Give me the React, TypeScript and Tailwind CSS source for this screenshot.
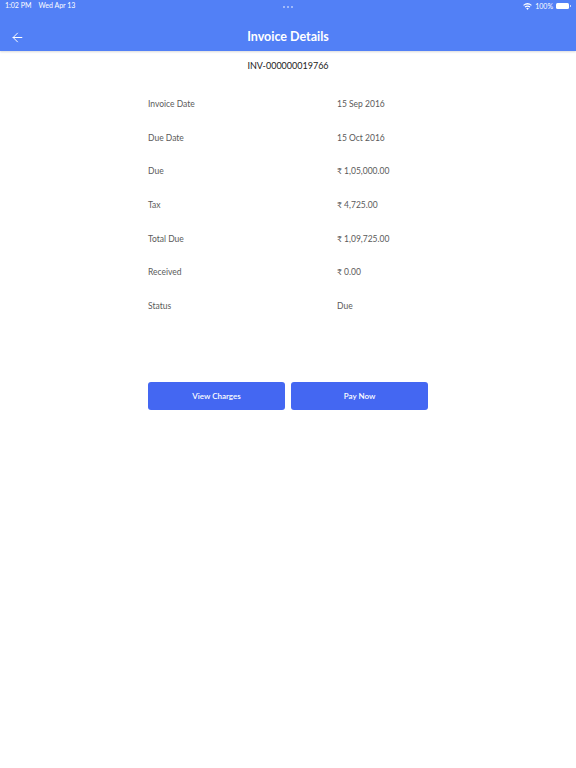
import { ArrowLeft } from "lucide-react";

const rows = [
  ["Invoice Date", "15 Sep 2016"],
  ["Due Date", "15 Oct 2016"],
  ["Due", "₹ 1,05,000.00"],
  ["Tax", "₹ 4,725.00"],
  ["Total Due", "₹ 1,09,725.00"],
  ["Received", "₹ 0.00"],
  ["Status", "Due"],
];

const App = () => {
  return (
    <div className="min-h-[768px] bg-white font-['Lato','Open_Sans',sans-serif]">
      <div className="bg-[#5280f6] shadow-[0_1px_2px_rgba(0,0,0,0.15)]">
        <div className="flex h-[24px] items-start justify-between px-[5px] pt-[0px] text-[7px] text-white">
          <div className="flex w-[100px] gap-[7px]">
            <span>1:02 PM</span>
            <span>Wed Apr 13</span>
          </div>
          <div className="flex gap-[2px] pt-[6px]">
            <span className="h-[2px] w-[2px] rounded-full bg-white/60" />
            <span className="h-[2px] w-[2px] rounded-full bg-white/60" />
            <span className="h-[2px] w-[2px] rounded-full bg-white/60" />
          </div>
          <div className="flex w-[100px] items-center justify-end gap-[3px] pt-[1px]">
            <svg width="9" height="7" viewBox="0 0 24 18" fill="white">
              <path d="M12 18l3.5-4.2a5.5 5.5 0 00-7 0z" />
              <path d="M12 9.5a9 9 0 015.8 2.1l1.9-2.3a12 12 0 00-15.4 0l1.9 2.3A9 9 0 0112 9.5z" />
              <path d="M12 3.5a15 15 0 019.6 3.5l1.9-2.3A18 18 0 00.5 4.7L2.4 7A15 15 0 0112 3.5z" />
            </svg>
            <span>100%</span>
            <div className="flex items-center">
              <div className="h-[6px] w-[13px] rounded-[1.5px] bg-white" />
              <div className="ml-[1px] h-[2px] w-[1px] bg-white/70" />
            </div>
          </div>
        </div>
        <div className="relative flex h-[27px] items-center justify-center">
          <button type="button" className="absolute left-[10px] top-[6px]">
            <ArrowLeft className="h-[15px] w-[15px] text-white" strokeWidth={1.6} />
          </button>
          <span className="text-[12.5px] font-bold text-white">Invoice Details</span>
        </div>
      </div>

      <div className="flex justify-center pt-[8px] text-[9px] text-[#222]">INV-000000019766</div>

      <div className="mx-auto mt-[15px] w-[280px]">
        {rows.map(([label, value]) => (
          <div key={label} className="grid h-[33.7px] grid-cols-[189px_1fr] items-center text-[8.5px] text-[#5a5a5a]">
            <span>{label}</span>
            <span>{value}</span>
          </div>
        ))}

        <div className="mt-[59px] flex gap-[6px]">
          <button
            type="button"
            className="h-[28px] flex-1 rounded-[3px] bg-[#4467f2] text-[8px] font-semibold text-white"
          >
            View Charges
          </button>
          <button
            type="button"
            className="h-[28px] flex-1 rounded-[3px] bg-[#4467f2] text-[8px] font-semibold text-white"
          >
            Pay Now
          </button>
        </div>
      </div>
    </div>
  );
};

export default App;
